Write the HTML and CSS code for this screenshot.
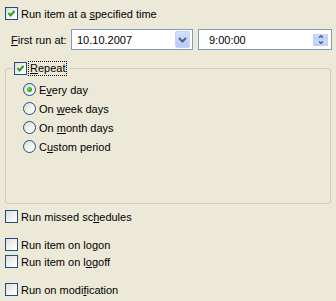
FILE: index.html
```html
<!DOCTYPE html>
<html>
<head>
	<meta charset="utf-8">
	<title>Schedule</title>
	<link rel="stylesheet" href="styles.css">
</head>
<body>
	<div id="agenda">
		<div class="linha topo">
			<span class="caixa marcada"><svg width="11" height="11" viewBox="0 0 11 11"><polyline points="2.5,5 4.5,7.5 8.5,3" /></svg></span>
			<span>Run item at a <u>s</u>pecified time</span>
		</div>

		<div class="linha inicio">
			<span class="rotulo"><u>F</u>irst run at:</span>
			<div class="campo data">
				<span class="valor">10.10.2007</span>
				<span class="botao-lista"><svg width="9" height="6" viewBox="0 0 9 6"><polyline points="1,1 4.5,4.5 8,1" /></svg></span>
			</div>
			<div class="campo hora">
				<span class="valor">9:00:00</span>
				<span class="giro">
					<span class="giro-parte"><svg width="7" height="4" viewBox="0 0 7 4"><polyline points="1,3.5 3.5,1 6,3.5" /></svg></span>
					<span class="giro-parte"><svg width="7" height="4" viewBox="0 0 7 4"><polyline points="1,0.5 3.5,3 6,0.5" /></svg></span>
				</span>
			</div>
		</div>

		<fieldset class="grupo">
			<legend class="linha">
				<span class="caixa marcada"><svg width="11" height="11" viewBox="0 0 11 11"><polyline points="2.5,5 4.5,7.5 8.5,3" /></svg></span>
				<span class="foco"><u>R</u>epeat</span>
			</legend>
			<div class="opcoes">
				<div class="linha"><span class="radio escolhido"></span><span>E<u>v</u>ery day</span></div>
				<div class="linha"><span class="radio"></span><span>On <u>w</u>eek days</span></div>
				<div class="linha"><span class="radio"></span><span>On <u>m</u>onth days</span></div>
				<div class="linha"><span class="radio"></span><span>C<u>u</u>stom period</span></div>
			</div>
		</fieldset>

		<div class="linha perdidos"><span class="caixa"></span><span>Run missed sc<u>h</u>edules</span></div>
		<div class="linha logon"><span class="caixa"></span><span>Run item on lo<u>g</u>on</span></div>
		<div class="linha logoff"><span class="caixa"></span><span>Run item on l<u>o</u>goff</span></div>
		<div class="linha modificacao"><span class="caixa"></span><span>Run on modi<u>f</u>ication</span></div>
	</div>
</body>
</html>
```

FILE: styles.css
```css
* {
	box-sizing: border-box;
}

body {
	margin: 0;
	background-color: #ece9d8;
	font-family: Tahoma, "Liberation Sans", Arial, sans-serif;
	font-size: 11px;
	color: #000;
}

#agenda {
	padding: 7px 4px 0 5px;
}

.linha {
	display: flex;
	align-items: center;
	height: 13px;
	gap: 3px;
	white-space: nowrap;
}

/* caixas de marcar no estilo XP */
.caixa {
	flex: none;
	width: 13px;
	height: 13px;
	border: 1px solid #1c5180;
	background: linear-gradient(135deg, #dcdcd7 0%, #f4f4f1 60%, #ffffff 100%);
	display: flex;
	align-items: center;
	justify-content: center;
}

.caixa svg polyline {
	fill: none;
	stroke: #21a121;
	stroke-width: 2;
}

.radio {
	flex: none;
	width: 13px;
	height: 13px;
	border-radius: 50%;
	border: 1px solid #1c5180;
	background: linear-gradient(135deg, #dcdcd7 0%, #f4f4f1 60%, #ffffff 100%);
	display: flex;
	align-items: center;
	justify-content: center;
}

.radio.escolhido::after {
	content: "";
	width: 5px;
	height: 5px;
	border-radius: 50%;
	background: radial-gradient(circle at 40% 40%, #5ee05e, #21a121 70%);
}

.inicio {
	height: 21px;
	margin-top: 9px;
	gap: 0;
}

.rotulo {
	width: 66px;
	padding-left: 6px;
}

.campo {
	height: 21px;
	border: 1px solid #7f9db9;
	background-color: #fff;
	display: flex;
	align-items: center;
	padding: 2px;
}

.data {
	width: 122px;
}

.hora {
	width: 134px;
	margin-left: 5px;
}

.valor {
	flex-grow: 1;
	padding-left: 3px;
}

.hora .valor {
	padding-left: 8px;
}

.botao-lista {
	width: 15px;
	height: 17px;
	border: 1px solid #c3d3fd;
	border-radius: 2px;
	background: linear-gradient(to bottom, #d3e0fd, #b6cbf7);
	display: flex;
	align-items: center;
	justify-content: center;
}

.botao-lista svg polyline,
.giro svg polyline {
	fill: none;
	stroke: #4d6185;
	stroke-width: 2;
}

.giro {
	width: 15px;
	height: 12px;
	display: flex;
	flex-direction: column;
	margin-right: 1px;
}

.giro-parte {
	height: 6px;
	flex-grow: 1;
	background: linear-gradient(to bottom, #d3e0fd, #b6cbf7);
	border: 1px solid #c3d3fd;
	display: flex;
	align-items: center;
	justify-content: center;
}

.giro-parte svg {
	width: 6px;
	height: 3px;
}

/* grupo de repeticao */
.grupo {
	margin: 11px 1px 0 0;
	padding: 0 6px 50px 7px;
	border: 1px solid #d0d0bf;
	border-radius: 3px;
}

.grupo legend {
	padding: 0 2px 0 1px;
	height: 15px;
	gap: 1px;
}

.foco {
	border: 1px dotted #000;
	padding: 0 1px;
	line-height: 13px;
}

.opcoes {
	padding: 7px 0 0 10px;
	display: flex;
	flex-direction: column;
	gap: 6px;
}

.perdidos {
	margin-top: 6px;
}

.logon {
	margin-top: 15px;
}

.logoff {
	margin-top: 4px;
}

.modificacao {
	margin-top: 15px;
}
```
